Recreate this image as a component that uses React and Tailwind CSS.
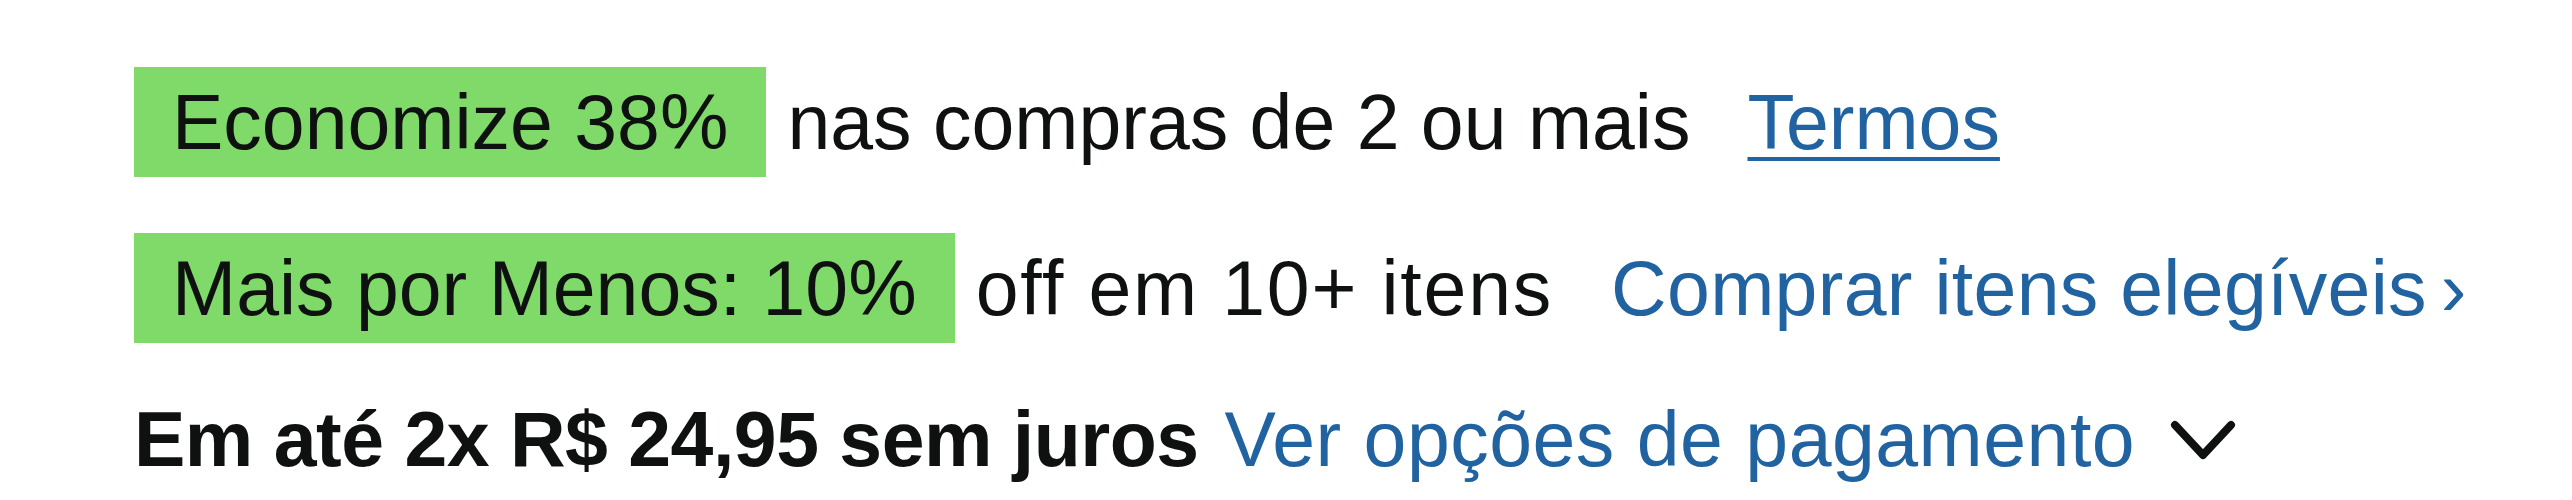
export default function App() {
  return (
    <div
      className="min-h-[500px] bg-white pl-[134px] pt-[67px] text-[77px] leading-[110px] text-[#0f1111]"
      style={{ fontFamily: '"Liberation Sans", Arial, sans-serif' }}
    >
      {/* savings coupon */}
      <div className="flex items-center whitespace-nowrap">
        <span className="bg-[#7fda69] px-[38px]">Economize 38%</span>
        <span className="ml-[21px]">nas compras de 2 ou mais</span>
        <a href="#" className="ml-[57px] text-[#2162a1] underline decoration-[4px] underline-offset-[8px]">
          Termos
        </a>
      </div>

      {/* mais por menos */}
      <div className="mt-[56px] flex items-center whitespace-nowrap">
        <span className="bg-[#7fda69] px-[38px]">Mais por Menos: 10%</span>
        <span className="ml-[21px] tracking-[1.8px]">off em 10+ itens</span>
        <a href="#" className="ml-[58px] text-[#2162a1] tracking-[0.3px]">
          Comprar itens elegíveis<span className="ml-[14px]">›</span>
        </a>
      </div>

      {/* installments */}
      <div className="mt-[41px] flex items-center whitespace-nowrap">
        <span className="font-bold tracking-[-0.5px]">Em até 2x R$ 24,95 sem juros</span>
        <a href="#" className="ml-[26px] text-[#2162a1] tracking-[0.5px]">Ver opções de pagamento</a>
        <svg
          className="ml-[34px] mt-[4px]"
          width="68"
          height="44"
          viewBox="0 0 68 44"
          fill="none"
          stroke="#0f1111"
          strokeWidth="8"
          strokeLinecap="round"
          strokeLinejoin="round"
        >
          <path d="M6 6 L34 36 L62 6" />
        </svg>
      </div>
    </div>
  );
}
